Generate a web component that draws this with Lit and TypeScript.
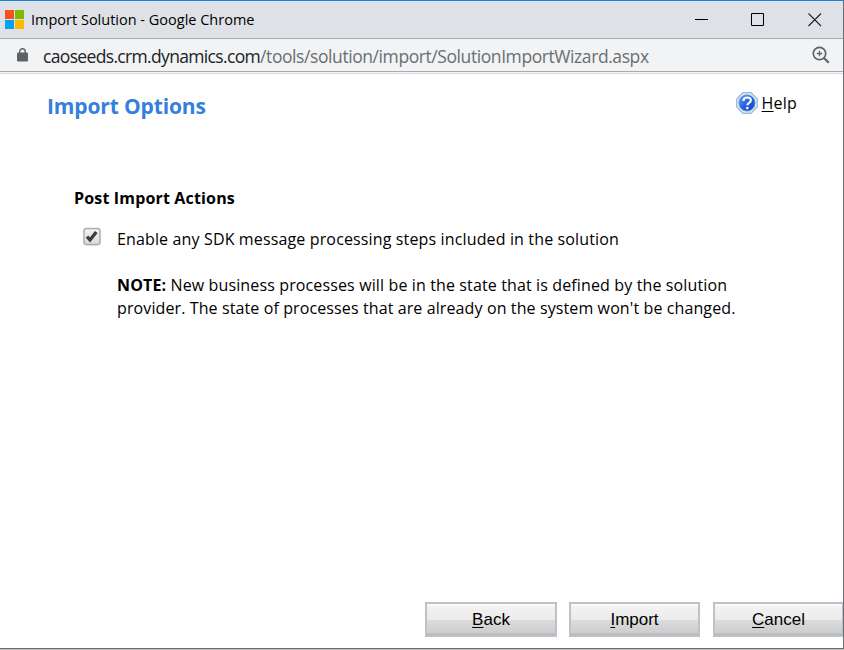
import { LitElement, html, css } from "lit";
import { customElement } from "lit/decorators.js";

@customElement("app-root")
export class AppRoot extends LitElement {
  static styles = css`
    :host {
      display: block;
      width: 844px;
      height: 650px;
      overflow: hidden;
      font-family: "Open Sans", "Noto Sans", sans-serif;
      color: #000;
    }
    * { box-sizing: border-box; }
    svg { display: block; flex: none; }
    u { text-decoration: underline; text-decoration-thickness: 1px; text-underline-offset: 2px; text-decoration-skip-ink: none; }
    .window {
      display: flex;
      flex-direction: column;
      height: 649px;
      border-top: 1px solid #1883d7;
      border-right: 1px solid #6b6d70;
      border-bottom: 1px solid #6b6b6b;
      background: #fff;
    }
    .shadow { height: 1px; background: #c4c4c4; }
    .titlebar {
      display: flex;
      align-items: center;
      height: 38px;
      flex: none;
      padding-left: 5px;
      background: #dee1e6;
      border-bottom: 1px solid #a9abae;
    }
    .title { margin-left: 7px; font-size: 14.5px; line-height: 20px; letter-spacing: 0; white-space: nowrap; }
    .controls { display: flex; margin-left: auto; padding-right: 21px; gap: 43px; }
    .address {
      display: flex;
      align-items: center;
      height: 33px;
      flex: none;
      padding: 0 13px 0 17px;
      background: #f1f3f4;
      border-bottom: 1px solid #a9abae;
    }
    .url { margin: 2px 0 0 14px; font-size: 17.5px; line-height: 24px; letter-spacing: -0.66px; white-space: nowrap; color: #202124; }
    .path { letter-spacing: -0.42px; color: #6b6e72; }
    .zoom { margin: 0 0 0 auto; }
    .page {
      display: flex;
      flex-direction: column;
      flex: 1;
      border-top: 1px solid #f4f5f6;
      box-shadow: inset 0 1px #d9dbdd;
    }
    .head { display: flex; justify-content: space-between; padding: 17px 46px 0 47px; height: 113px; }
    h1 { margin: 2px 0 0; font-size: 21px; line-height: 28px; font-weight: 700; letter-spacing: -0.14px; color: #3580dc; }
    .help { display: flex; align-items: center; gap: 4px; height: 26px; font-size: 16px; letter-spacing: 0.2px; }
    .options { padding-left: 74px; flex: 1; }
    h2 { margin: 0; font-size: 16px; line-height: 24px; font-weight: 700; letter-spacing: 0.16px; }
    .row { display: flex; margin: 17px 0 0 9px; }
    .text { margin: 1px 0 0 16px; font-size: 16px; line-height: 23px; white-space: nowrap; }
    .note { margin: 23px 0 0; }
    .line { display: block; }
    .l1 { letter-spacing: 0.14px; }
    .l2 { letter-spacing: 0.13px; }
    .l3 { letter-spacing: 0.11px; }
    .footer { display: flex; gap: 12px; padding-left: 425px; height: 46px; flex: none; }
    .btn {
      flex: none;
      width: 132px;
      height: 35px;
      padding: 0;
      border: 2px solid #bcc2c7;
      border-radius: 0;
      background: linear-gradient(#fff 0, #f2f2f2 3px, #ebebeb 50%, #dcdcdc 52%, #cdcdcd 29px, #b5b8ba 30px);
      font: 17px/30px "Liberation Sans", Arial, sans-serif;
      color: #000;
      text-align: center;
    }
    .import { width: 131px; }
    .cancel { margin-left: 1px; width: 130px; border-right-width: 1px; }
  `;

  render() {
    return html`
      <div class="window">
        <div class="titlebar">
          <svg width="19" height="19" viewBox="0 0 19 19">
            <path fill="#f65120" d="M0 0h9v9H0z" />
            <path fill="#7fb900" d="M10 0h9v9h-9z" />
            <path fill="#00a3f0" d="M0 10h9v9H0z" />
            <path fill="#ffb900" d="M10 10h9v9h-9z" />
          </svg>
          <span class="title">Import Solution - Google Chrome</span>
          <div class="controls">
            <svg width="13" height="14" viewBox="0 0 13 14"><path d="M0 6.500h13" stroke="#000" /></svg>
            <svg width="14" height="14" viewBox="0 0 14 14"><path d="M.5 .5h12v12H.5z" fill="none" stroke="#000" /></svg>
            <svg width="14" height="14" viewBox="0 0 14 14"><path d="M.5 .5L13 13M13 .5L.5 13" stroke="#222" stroke-width="1.1" /></svg>
          </div>
        </div>
        <div class="address">
          <svg width="12" height="14" viewBox="0 0 12 14">
            <rect x="0" y="4.500" width="11" height="9" rx="1.200" fill="#5f6368" />
            <path d="M2.700 5.500V3.500a2.800 2.800 0 0 1 5.600 0v2" fill="none" stroke="#5f6368" stroke-width="1.400" />
          </svg>
          <span class="url">caoseeds.crm.dynamics.com<span class="path">/tools/solution/import/SolutionImportWizard.aspx</span></span>
          <svg class="zoom" width="18" height="18" viewBox="0 0 18 18" fill="none" stroke="#5f6368">
            <circle cx="7.500" cy="7.500" r="6.200" stroke-width="1.700" />
            <path d="M11.700 11.700l5 5" stroke-width="2.200" />
            <path d="M7.500 4.800v5.400M4.800 7.500h5.400" stroke-width="1.300" />
          </svg>
        </div>
        <div class="page">
          <div class="head">
            <h1>Import Options</h1>
            <div class="help">
              <svg width="22" height="22" viewBox="0 0 22 22">
                <defs>
                  <linearGradient id="ball" x1="0" y1="0" x2="1" y2="1">
                    <stop offset="0" stop-color="#6d9df5" />
                    <stop offset=".5" stop-color="#2862df" />
                    <stop offset="1" stop-color="#143fc0" />
                  </linearGradient>
                </defs>
                <path d="M7 .7h8L21.300 7v8L15 21.300H7L.7 15V7z" fill="#dce8f5" stroke="#9ab8d8" stroke-width="1.200" />
                <circle cx="11" cy="11" r="8" fill="url(#ball)" stroke="#5f8fd8" />
                <path d="M7.500 9q0-3.500 3.700-3.500T14.800 8.600c0 2.400-3.400 2.200-3.400 4.700" fill="none" stroke="#fff" stroke-width="2.200" />
                <circle cx="11.300" cy="16" r="1.300" fill="#fff" />
              </svg>
              <span><u>H</u>elp</span>
            </div>
          </div>
          <div class="options">
            <h2>Post Import Actions</h2>
            <div class="row">
              <svg width="18" height="19" viewBox="0 0 18 19">
                <defs>
                  <linearGradient id="face" x1="0" y1="0" x2="0" y2="1">
                    <stop offset="0" stop-color="#f2f2f2" />
                    <stop offset="1" stop-color="#dcdcdc" />
                  </linearGradient>
                </defs>
                <rect x="1" y="2" width="16" height="16.500" rx="2.500" fill="#e3e3e3" />
                <rect x="1" y="1.500" width="16" height="16" rx="2.500" fill="url(#face)" stroke="#adadad" stroke-width="1.500" />
                <path d="M4 9.700l3 3.200 6.300-8" fill="none" stroke="#3c3c3c" stroke-width="3.300" />
              </svg>
              <div class="text">
                <span class="line l1">Enable any SDK message processing steps included in the solution</span>
                <p class="note">
                  <span class="line l2"><b>NOTE:</b> New business processes will be in the state that is defined by the solution</span>
                  <span class="line l3">provider. The state of processes that are already on the system won't be changed.</span>
                </p>
              </div>
            </div>
          </div>
          <div class="footer">
            <button class="btn"><u>B</u>ack</button>
            <button class="btn import"><u>I</u>mport</button>
            <button class="btn cancel"><u>C</u>ancel</button>
          </div>
        </div>
      </div>
      <div class="shadow"></div>
    `;
  }
}
